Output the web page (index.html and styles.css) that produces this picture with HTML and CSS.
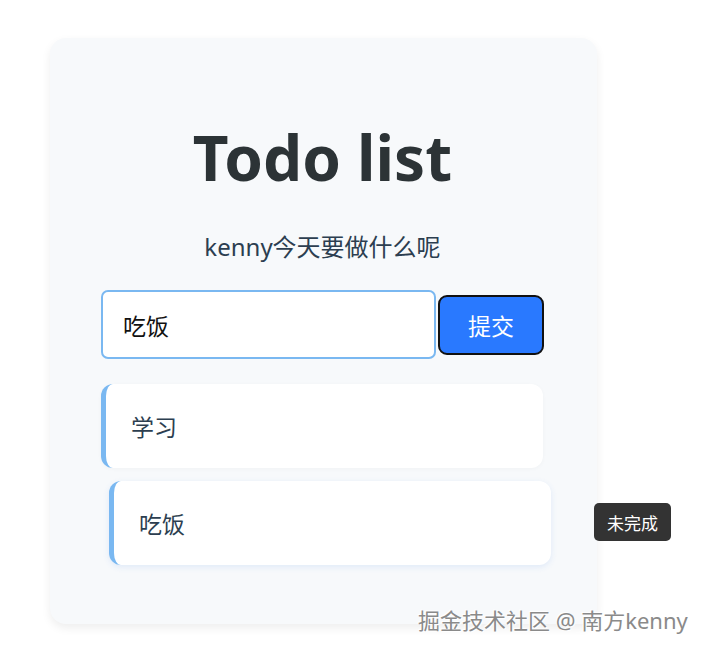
FILE: index.html
```html
<!DOCTYPE html>
<html lang="zh">
<head>
<meta charset="utf-8">
<title>Todo list</title>
<link rel="stylesheet" href="styles.css">
</head>
<body>
<div class="card">
  <h1 class="title">Todo list</h1>
  <p class="subtitle">kenny今天要做什么呢</p>
  <div class="form">
    <div class="input">吃饭</div>
    <button class="submit">提交</button>
  </div>
  <ul class="list">
    <li class="item">学习</li>
    <li class="item item-hover">吃饭</li>
  </ul>
</div>
<div class="tooltip">未完成</div>
<div class="watermark">掘金技术社区 @ 南方kenny</div>
</body>
</html>
```

FILE: styles.css
```css
html, body {
  margin: 0;
  padding: 0;
  background: #ffffff;
}
body {
  position: relative;
  width: 711px;
  height: 652px;
  overflow: hidden;
  padding: 38px 0 0 50px;
  box-sizing: border-box;
  font-family: "Noto Sans", "Noto Sans CJK SC", sans-serif;
  color: #2c3e50;
}
.card {
  width: 547px;
  box-sizing: border-box;
  padding: 82px 53px 59px 51px;
  background: #f7f9fb;
  border-radius: 16px;
  box-shadow: 0 4px 10px rgba(0, 0, 0, 0.07);
}
.title {
  margin: 0;
  font-size: 62px;
  line-height: 1.2;
  font-weight: 700;
  text-align: center;
  color: #2c3336;
}
.subtitle {
  margin: 35px 0 0;
  font-size: 24px;
  line-height: 36px;
  text-align: center;
  color: #2c3e50;
}
.form {
  margin-top: 25px;
  display: flex;
  align-items: center;
  gap: 2px;
}
.input {
  width: 335px;
  height: 69px;
  box-sizing: border-box;
  border: 2px solid #7ab8f1;
  border-radius: 7px;
  background: #fff;
  padding-left: 20px;
  display: flex;
  align-items: center;
  font-size: 23px;
  color: #111;
}
.submit {
  width: 106px;
  height: 60px;
  box-sizing: border-box;
  border: 2px solid #111;
  border-radius: 9px;
  background: #2979ff;
  color: #fff;
  font-family: inherit;
  font-size: 23px;
  padding: 0;
}
.list {
  list-style: none;
  margin: 25px 0 0;
  padding: 0;
  display: flex;
  flex-direction: column;
  gap: 13px;
}
.item {
  width: 442px;
  height: 84px;
  box-sizing: border-box;
  background: #fff;
  border-left: 5px solid #7ab8f1;
  border-radius: 12px;
  padding-left: 25px;
  display: flex;
  align-items: center;
  font-size: 23px;
  color: #2c3e50;
  box-shadow: 0 1px 4px rgba(0, 0, 0, 0.03);
}
.item-hover {
  transform: translateX(8px);
  box-shadow: 0 2px 6px rgba(60, 120, 230, 0.12);
}
.tooltip {
  position: absolute;
  left: 594px;
  top: 503px;
  width: 77px;
  height: 38px;
  border-radius: 5px;
  background: #333;
  color: #fff;
  font-size: 17px;
  display: flex;
  align-items: center;
  justify-content: center;
}
.watermark {
  position: absolute;
  left: 418px;
  top: 604px;
  font-size: 22px;
  line-height: 32px;
  color: #8a8a8a;
  text-shadow: 1px 1px 1px #fff, -1px -1px 1px #fff;
  white-space: nowrap;
}
```
